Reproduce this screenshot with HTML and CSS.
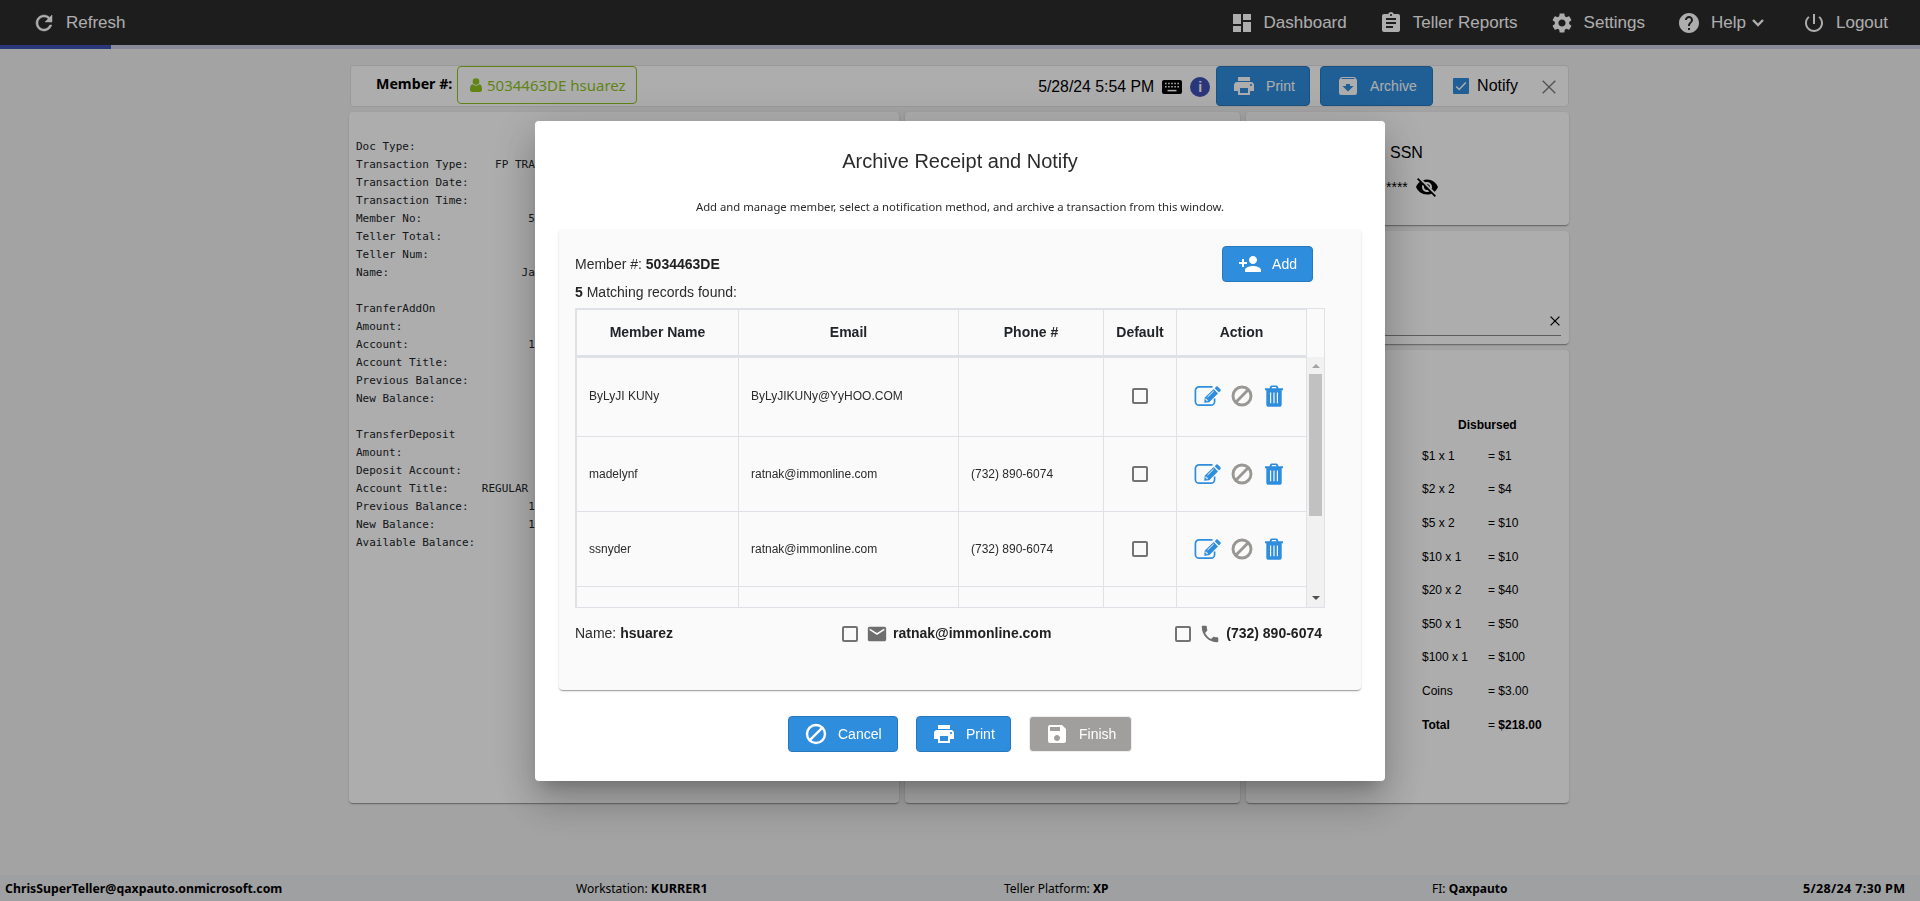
FILE: index.html
```html
<!DOCTYPE html>
<html lang="en">
<head>
    <meta charset="utf-8">
    <title>Teller Receipts</title>
    <link rel="stylesheet" href="styles.css">
</head>
<body>
    <!-- shared icons -->
    <svg class="sprite">
        <symbol id="i-print" viewBox="0 0 24 24"><path d="M19 8H5c-1.660 0-3 1.340-3 3v6h4v4h12v-4h4v-6c0-1.660-1.340-3-3-3zm-3 11H8v-5h8v5zm3-7c-.55 0-1-.45-1-1s.45-1 1-1 1 .45 1 1-.45 1-1 1zm-1-9H6v4h12V3z"/></symbol>
        <symbol id="i-ban" viewBox="0 0 24 24"><circle cx="12" cy="12" r="9" fill="none" stroke="currentColor" stroke-width="2.400"/><path d="M5.800 18.200L18.200 5.800" stroke="currentColor" stroke-width="2.400"/></symbol>
        <symbol id="i-ban-thick" viewBox="0 0 22 22"><circle cx="11" cy="11" r="9" fill="none" stroke="currentColor" stroke-width="2.900"/><path d="M4.800 17.200L17.200 4.800" stroke="currentColor" stroke-width="2.900"/></symbol>
        <symbol id="i-edit" viewBox="0 0 27 22"><path d="M18.500 1.800H5.200A3.800 3.800 0 0 0 1.400 5.600v10.800a3.800 3.800 0 0 0 3.800 3.800h11.600a3.800 3.800 0 0 0 3.800-3.800v-2.900" fill="none" stroke="currentColor" stroke-width="1.700"/><path d="M10.200 17.800l.6-5.200 8.900-8.500 4.300 4.400-8.800 8.700zM20.700 3.200l1.500-1.500c.5-.5 1.200-.5 1.700 0l2.500 2.500c.5.500.5 1.200 0 1.700L25 7.400z"/><path d="M13.500 12l6.200-6M11.900 13.600v1.300h1.300v1.300" fill="none" stroke="#fafafa" stroke-width="1"/></symbol>
        <symbol id="i-trash" viewBox="0 0 20 22"><path d="M5.500 3.300l.8-2A1.500 1.500 0 0 1 7.700.5h4.600a1.500 1.500 0 0 1 1.400.8l.8 2H19v1.900h-1.300v14.200c0 1.400-.9 2.300-2.200 2.300h-11c-1.300 0-2.200-.9-2.200-2.300V5.200H1V3.300zm2 0h5l-.6-1.200H8.100z"/><path d="M6.600 7.500v10.800M10 7.500v10.800M13.400 7.500v10.800" stroke="#fafafa" stroke-width="1.200"/></symbol>
    </svg>

    <header class="navbar">
        <a class="nav-item"><svg class="nav-icon" viewBox="0 0 24 24"><path d="M17.650 6.350C16.200 4.900 14.210 4 12 4c-4.420 0-7.990 3.580-7.990 8s3.570 8 7.990 8c3.730 0 6.840-2.550 7.730-6h-2.080c-.82 2.330-3.040 4-5.650 4-3.310 0-6-2.690-6-6s2.690-6 6-6c1.660 0 3.140.69 4.220 1.780L13 11h7V4l-2.350 2.350z" stroke="currentColor" stroke-width=".5"/></svg>Refresh</a>
        <nav class="nav-right">
            <a class="nav-item"><svg class="nav-icon" viewBox="0 0 24 24"><path d="M3 13h8V3H3v10zm0 8h8v-6H3v6zm10 0h8V11h-8v10zm0-18v6h8V3h-8z"/></svg>Dashboard</a>
            <a class="nav-item"><svg class="nav-icon" viewBox="0 0 24 24"><path d="M19 3h-4.180C14.400 1.840 13.300 1 12 1s-2.400.84-2.820 2H5c-1.100 0-2 .9-2 2v14c0 1.100.9 2 2 2h14c1.100 0 2-.9 2-2V5c0-1.100-.9-2-2-2zm-7 0c.55 0 1 .45 1 1s-.45 1-1 1-1-.45-1-1 .45-1 1-1zm2 14H7v-2h7v2zm3-4H7v-2h10v2zm0-4H7V7h10v2z"/></svg>Teller Reports</a>
            <a class="nav-item"><svg class="nav-icon" viewBox="0 0 24 24"><path d="M19.140 12.940c.04-.3.06-.61.06-.94 0-.32-.02-.64-.07-.94l2.030-1.580c.18-.14.23-.41.12-.61l-1.920-3.320c-.12-.22-.37-.29-.59-.22l-2.390.96c-.5-.38-1.030-.7-1.620-.94l-.36-2.540c-.04-.24-.24-.41-.48-.41h-3.840c-.24 0-.43.17-.47.41l-.36 2.540c-.59.24-1.130.57-1.620.94l-2.390-.96c-.22-.08-.47 0-.59.22L2.740 8.870c-.12.21-.08.47.12.61l2.030 1.580c-.05.3-.09.63-.09.94s.02.64.07.94l-2.030 1.580c-.18.14-.23.41-.12.61l1.920 3.320c.12.22.37.29.59.22l2.390-.96c.5.38 1.030.7 1.620.94l.36 2.540c.05.24.24.41.48.41h3.840c.24 0 .44-.17.47-.41l.36-2.540c.59-.24 1.130-.56 1.620-.94l2.390.96c.22.08.47 0 .59-.22l1.920-3.320c.12-.22.07-.47-.12-.61l-2.010-1.580zM12 15.600c-1.980 0-3.600-1.620-3.600-3.600s1.620-3.600 3.600-3.600 3.600 1.620 3.600 3.600-1.620 3.600-3.600 3.600z"/></svg>Settings</a>
            <a class="nav-item"><svg class="nav-icon" viewBox="0 0 24 24"><path d="M12 2C6.480 2 2 6.480 2 12s4.480 10 10 10 10-4.480 10-10S17.520 2 12 2zm1 17h-2v-2h2v2zm2.070-7.750l-.9.920C13.450 12.900 13 13.500 13 15h-2v-.5c0-1.100.45-2.100 1.170-2.830l1.240-1.260c.37-.36.59-.86.59-1.410 0-1.100-.9-2-2-2s-2 .9-2 2H8c0-2.210 1.790-4 4-4s4 1.790 4 4c0 .88-.36 1.680-.93 2.250z"/></svg>Help<svg class="nav-caret" viewBox="0 0 12 8"><path d="M1 1l5 5 5-5" fill="none" stroke="currentColor" stroke-width="2.400"/></svg></a>
            <a class="nav-item nav-logout"><svg class="nav-icon" viewBox="0 0 24 24"><path d="M13 3h-2v10h2V3zm4.830 2.170l-1.420 1.420C17.990 7.860 19 9.810 19 12c0 3.870-3.130 7-7 7s-7-3.130-7-7c0-2.190 1.010-4.140 2.580-5.420L6.170 5.170C4.230 6.820 3 9.260 3 12c0 4.970 4.030 9 9 9s9-4.030 9-9c0-2.740-1.230-5.180-3.170-6.830z"/></svg>Logout</a>
        </nav>
    </header>
    <div class="progress"><div class="progress-fill"></div></div>

    <main class="page">
        <section class="toolbar">
            <strong class="toolbar-label">Member #:</strong>
            <span class="member-tag"><svg class="user-icon" viewBox="0 0 12 14"><circle cx="6" cy="3.600" r="3.300"/><path d="M2.600 6.300A4.600 4.600 0 0 0 6 7.700a4.600 4.600 0 0 0 3.400-1.400C11.400 6.700 12 8.700 12 11.200 12 13 11.200 14 9.800 14H2.200C.8 14 0 13 0 11.200 0 8.700.6 6.700 2.600 6.300z"/></svg>5034463DE hsuarez</span>
            <div class="toolbar-right">
                <span class="toolbar-date">5/28/24 5:54 PM</span>
                <svg class="kbd-icon" viewBox="0 0 20 14"><rect width="20" height="14" rx="2"/><path d="M3 3.500h14M3 6.800h14" stroke="#fff" stroke-width="1.600" stroke-dasharray="1.600 1.500"/><path d="M5.500 10.600h9" stroke="#fff" stroke-width="1.600"/></svg>
                <span class="info-icon">i</span>
                <button class="btn btn-tall btn-print"><svg class="btn-icon"><use href="#i-print"/></svg>Print</button>
                <button class="btn btn-tall btn-archive"><svg class="btn-icon" viewBox="0 0 24 24"><path d="M20.540 5.230l-1.390-1.680C18.880 3.210 18.470 3 18 3H6c-.47 0-.88.21-1.160.55L3.460 5.230C3.170 5.570 3 6.020 3 6.500V19c0 1.100.9 2 2 2h14c1.100 0 2-.9 2-2V6.500c0-.48-.17-.93-.46-1.270zM12 17.500L6.500 12H10v-2h4v2h3.500L12 17.500zM5.120 5l.81-1h12l.94 1H5.120z"/></svg>Archive</button>
                <label class="notify"><svg class="check-on" viewBox="0 0 16 16"><rect width="16" height="16" rx="1"/><path d="M3.200 8.500l3 3 6.600-7" fill="none" stroke="#fff" stroke-width="1.500"/></svg>Notify</label>
                <svg class="close-icon" viewBox="0 0 14 14"><path d="M.7.7l12.600 12.600M13.300.7L.7 13.300"/></svg>
            </div>
        </section>

        <section class="columns">
            <div class="card receipt">
<pre>Doc Type:
Transaction Type:    FP TRAN
Transaction Date:          5
Transaction Time:
Member No:                50
Teller Total:
Teller Num:
Name:                    Jam

TranferAddOn
Amount:
Account:                  10
Account Title:
Previous Balance:          4
New Balance:               4

TransferDeposit
Amount:
Deposit Account:
Account Title:     REGULAR S
Previous Balance:         1
New Balance:              1
Available Balance:</pre>
            </div>
            <div class="card"></div>
            <div class="side">
                <div class="card ssn">
                    <div class="ssn-title">SSN</div>
                    <div class="ssn-value">****<svg class="eye-icon" viewBox="0 0 24 24"><path d="M12 7c2.760 0 5 2.240 5 5 0 .65-.13 1.260-.36 1.830l2.920 2.920c1.510-1.260 2.700-2.890 3.430-4.750-1.730-4.390-6-7.500-11-7.500-1.400 0-2.740.25-3.980.7l2.160 2.160C10.740 7.130 11.350 7 12 7zM2 4.270l2.280 2.280.46.46C3.080 8.300 1.780 10.020 1 12c1.730 4.390 6 7.500 11 7.500 1.550 0 3.030-.3 4.380-.84l.42.42L19.730 22 21 20.730 3.270 3 2 4.270zM7.530 9.800l1.550 1.550c-.05.21-.08.43-.08.65 0 1.660 1.340 3 3 3 .22 0 .44-.03.65-.08l1.550 1.550c-.67.33-1.410.53-2.200.53-2.760 0-5-2.240-5-5 0-.79.2-1.530.53-2.200zm4.310-.78l3.150 3.150.02-.16c0-1.660-1.340-3-3-3l-.17.01z"/></svg></div>
                </div>
                <div class="card search">
                    <div class="search-field"><svg class="clear-icon" viewBox="0 0 10 10"><path d="M.6.6l8.800 8.800M9.400.6L.6 9.400"/></svg></div>
                </div>
                <div class="card cash">
                    <div class="cash-title">Disbursed</div>
                    <dl class="cash-list">
                        <dt>$1 x 1</dt><dd>= $1</dd>
                        <dt>$2 x 2</dt><dd>= $4</dd>
                        <dt>$5 x 2</dt><dd>= $10</dd>
                        <dt>$10 x 1</dt><dd>= $10</dd>
                        <dt>$20 x 2</dt><dd>= $40</dd>
                        <dt>$50 x 1</dt><dd>= $50</dd>
                        <dt>$100 x 1</dt><dd>= $100</dd>
                        <dt>Coins</dt><dd>= $3.00</dd>
                        <dt><b>Total</b></dt><dd>= <b>$218.00</b></dd>
                    </dl>
                </div>
            </div>
        </section>
    </main>

    <footer class="statusbar">
        <b class="status-user">ChrisSuperTeller@qaxpauto.onmicrosoft.com</b>
        <span>Workstation: <b class="status-station">KURRER1</b></span>
        <span>Teller Platform: <b>XP</b></span>
        <span>FI: <b>Qaxpauto</b></span>
        <b class="status-time">5/28/24 7:30 PM</b>
    </footer>

    <div class="backdrop">
        <div class="dialog">
            <h2 class="dialog-title">Archive Receipt and Notify</h2>
            <p class="dialog-text">Add and manage member, select a notification method, and archive a transaction from this window.</p>

            <div class="panel">
                <div class="panel-head">
                    <div class="panel-info">
                        <div>Member #: <b>5034463DE</b></div>
                        <div><b>5</b> Matching records found:</div>
                    </div>
                    <button class="btn btn-add"><svg class="btn-icon" viewBox="0 0 24 24"><path d="M15 12c2.210 0 4-1.790 4-4s-1.790-4-4-4-4 1.790-4 4 1.790 4 4 4zm-9-2V7H4v3H1v2h3v3h2v-3h3v-2H6zm9 4c-2.670 0-8 1.340-8 4v2h16v-2c0-2.660-5.330-4-8-4z"/></svg>Add</button>
                </div>

                <div class="grid">
                    <table class="members members-head">
                        <tr><th class="col-name">Member Name</th><th class="col-email">Email</th><th class="col-phone">Phone #</th><th class="col-default">Default</th><th class="col-action">Action</th></tr>
                    </table>
                    <div class="grid-body">
                        <table class="members">
                            <tr class="row-first">
                                <td class="col-name">ByLyJI KUNy</td><td class="col-email">ByLyJIKUNy@YyHOO.COM</td><td class="col-phone"></td>
                                <td class="col-default"><span class="check"></span></td>
                                <td class="col-action"><div class="actions"><svg class="edit"><use href="#i-edit"/></svg><svg class="ban"><use href="#i-ban-thick"/></svg><svg class="trash"><use href="#i-trash"/></svg></div></td>
                            </tr>
                            <tr>
                                <td>madelynf</td><td>ratnak@immonline.com</td><td>(732) 890-6074</td>
                                <td><span class="check"></span></td>
                                <td><div class="actions"><svg class="edit"><use href="#i-edit"/></svg><svg class="ban"><use href="#i-ban-thick"/></svg><svg class="trash"><use href="#i-trash"/></svg></div></td>
                            </tr>
                            <tr>
                                <td>ssnyder</td><td>ratnak@immonline.com</td><td>(732) 890-6074</td>
                                <td><span class="check"></span></td>
                                <td><div class="actions"><svg class="edit"><use href="#i-edit"/></svg><svg class="ban"><use href="#i-ban-thick"/></svg><svg class="trash"><use href="#i-trash"/></svg></div></td>
                            </tr>
                            <tr><td></td><td></td><td></td><td></td><td></td></tr>
                        </table>
                        <div class="scrollbar">
                            <span class="arrow arrow-up"></span>
                            <span class="thumb"></span>
                            <span class="arrow arrow-down"></span>
                        </div>
                    </div>
                </div>

                <div class="contact">
                    <div class="contact-name">Name: <b>hsuarez</b></div>
                    <label class="contact-item"><span class="check"></span><svg class="mail" viewBox="0 0 24 24"><path d="M20 4H4c-1.100 0-1.990.9-1.990 2L2 18c0 1.100.9 2 2 2h16c1.100 0 2-.9 2-2V6c0-1.100-.9-2-2-2zm0 4l-8 5-8-5V6l8 5 8-5v2z"/></svg><b>ratnak@immonline.com</b></label>
                    <label class="contact-item contact-phone"><span class="check"></span><svg class="phone" viewBox="0 0 24 24"><path d="M6.620 10.790c1.440 2.830 3.760 5.140 6.590 6.590l2.200-2.200c.27-.27.67-.36 1.020-.24 1.120.37 2.330.57 3.570.57.55 0 1 .45 1 1V20c0 .55-.45 1-1 1-9.390 0-17-7.610-17-17 0-.55.45-1 1-1h3.500c.55 0 1 .45 1 1 0 1.250.2 2.450.57 3.570.11.35.03.74-.25 1.020l-2.200 2.200z"/></svg><b>(732) 890-6074</b></label>
                </div>
            </div>

            <div class="dialog-actions">
                <button class="btn btn-cancel"><svg class="btn-icon"><use href="#i-ban"/></svg>Cancel</button>
                <button class="btn btn-dprint"><svg class="btn-icon"><use href="#i-print"/></svg>Print</button>
                <button class="btn btn-finish" disabled><svg class="btn-icon" viewBox="0 0 24 24"><path d="M17 3H5c-1.110 0-2 .9-2 2v14c0 1.100.89 2 2 2h14c1.100 0 2-.9 2-2V7l-4-4zm-5 16c-1.660 0-3-1.340-3-3s1.340-3 3-3 3 1.340 3 3-1.340 3-3 3zm3-10H5V5h10v4z"/></svg>Finish</button>
            </div>
        </div>
    </div>
</body>
</html>
```

FILE: styles.css
```css
* {
    box-sizing: border-box;
}
body {
    margin: 0;
    height: 901px;
    display: flex;
    flex-direction: column;
    overflow: hidden;
    background-color: #f1f1f1;
    color: #000;
    font-family: Arial, "Liberation Sans", sans-serif;
    font-size: 14px;
}
svg {
    fill: currentColor;
    flex: none;
}
.sprite {
    position: absolute;
    width: 0;
    height: 0;
}

/* top bar */
.navbar {
    display: flex;
    justify-content: space-between;
    height: 45px;
    padding: 0 32px;
    background-color: #2c2c2c;
    color: #fff;
    font-size: 17px;
}
.nav-item {
    display: flex;
    align-items: center;
}
.nav-right {
    display: flex;
    gap: 32px;
}
.nav-logout {
    margin-left: 6px;
}
.nav-icon {
    width: 24px;
    height: 24px;
    margin-right: 10px;
}
.nav-caret {
    width: 12px;
    height: 8px;
    margin-left: 6px;
}
.progress {
    height: 4px;
    background-color: #c9cce4;
}
.progress-fill {
    width: 111px;
    height: 4px;
    background-color: #3f51b5;
}

.page {
    width: 1220px;
    margin-left: 349px;
    padding-top: 16px;
}
.toolbar {
    display: flex;
    align-items: flex-start;
    height: 42px;
    margin-left: 1px;
    border: 1px solid #e2e2e2;
    border-radius: 4px;
    background-color: #fff;
    font-size: 16px;
}
.toolbar-label {
    width: 106px;
    padding: 8px 0 0 25px;
    font-family: "Segoe UI", "Noto Sans", sans-serif;
    font-size: 14.2px;
    white-space: nowrap;
}
.member-tag {
    display: flex;
    align-items: center;
    width: 180px;
    height: 38px;
    padding-left: 12px;
    border: 1px solid #8fc31f;
    border-radius: 4px;
    color: #8fc31f;
    font-family: "Segoe UI", "Noto Sans", sans-serif;
    font-size: 15px;
    white-space: nowrap;
}
.user-icon {
    width: 12px;
    height: 14px;
    margin-right: 5px;
}
.toolbar-right {
    display: flex;
    align-items: center;
    height: 40px;
    margin-left: auto;
    padding-right: 12px;
}
.toolbar-date {
    padding-top: 2px;
    font-size: 15.8px;
}
.kbd-icon {
    width: 20px;
    height: 14px;
    margin: 1px 8px 0;
}
.info-icon {
    width: 20px;
    height: 20px;
    margin: 2px 6px 0 0;
    border-radius: 50%;
    background-color: #3f51b5;
    color: #fff;
    font-size: 14px;
    font-weight: bold;
    line-height: 20px;
    text-align: center;
}
.notify {
    display: flex;
    align-items: center;
    margin: 0 24px 0 20px;
}
.check-on {
    width: 16px;
    height: 16px;
    margin-right: 8px;
    color: #2f8ddd;
}
.close-icon {
    width: 14px;
    height: 14px;
    margin-top: 2px;
    stroke: #777;
    stroke-width: 1.3;
}

/* buttons */
.btn {
    display: flex;
    align-items: center;
    height: 36px;
    padding: 0 15px;
    border: 1px solid #2878be;
    border-radius: 4px;
    background-color: #2f8ddd;
    color: #fff;
    font-family: inherit;
    font-size: 14px;
}
.btn-icon {
    width: 24px;
    height: 24px;
    margin-right: 10px;
}
.btn-tall {
    height: 40px;
}
.btn-print {
    width: 94px;
    margin-right: 10px;
}
.btn-archive {
    width: 113px;
}

.columns {
    display: flex;
    gap: 6px;
    height: 691px;
    margin-top: 5px;
}
.card {
    width: 335px;
    border-radius: 4px;
    background-color: #fff;
    box-shadow: 0 2px 1px -1px rgba(0,0,0,.2), 0 1px 1px 0 rgba(0,0,0,.14), 0 1px 3px 0 rgba(0,0,0,.12);
}
.receipt {
    width: 550px;
    padding: 26px 7px;
}
.receipt pre {
    width: 190px;
    margin: 0;
    font-family: Consolas, "DejaVu Sans Mono", monospace;
    font-size: 11px;
    line-height: 18px;
    color: #212529;
}
.side {
    display: flex;
    flex-direction: column;
    gap: 6px;
    width: 323px;
}
.side .card {
    width: 323px;
}
.ssn {
    height: 113px;
    padding: 32px 0 0 140px;
}
.ssn-title {
    padding-left: 4px;
    font-size: 16px;
}
.ssn-value {
    display: flex;
    align-items: center;
    margin-top: 13px;
}
.eye-icon {
    width: 24px;
    height: 24px;
    margin-left: 7px;
}
.search {
    height: 113px;
    padding: 0 8px;
}
.search-field {
    display: flex;
    justify-content: flex-end;
    height: 105px;
    padding: 85px 1px 0;
    border-bottom: 1px solid #8a8a8a;
}
.clear-icon {
    width: 10px;
    height: 10px;
    stroke: #000;
    stroke-width: 1.3;
}
.cash {
    flex: 1;
    padding-top: 68px;
    font-size: 12px;
}
.cash-title {
    margin-left: 212px;
    font-weight: bold;
}
.cash-list {
    display: grid;
    grid-template-columns: 66px auto;
    grid-auto-rows: 33.6px;
    align-items: center;
    margin: 7px 0 0 176px;
}
.cash-list dd {
    margin: 0;
}

.statusbar {
    display: grid;
    grid-template-columns: 571px 428px 428px 371px auto;
    align-items: center;
    height: 26px;
    margin-top: auto;
    padding-left: 5px;
    background-color: #ebecee;
    font-family: "Segoe UI", "Noto Sans", sans-serif;
    font-size: 12px;
}
.status-user {
    font-size: 12.3px;
}
.status-station {
    font-size: 12.6px;
}
.status-time {
    font-size: 12.6px;
    letter-spacing: .3px;
}

/* archive dialog */
.backdrop {
    position: fixed;
    inset: 0;
    padding: 121px 0 0 535px;
    background-color: rgba(0,0,0,.32);
}
.dialog {
    width: 850px;
    height: 660px;
    padding: 27px 24px 0;
    border-radius: 4px;
    background-color: #fff;
    color: #2b2b2b;
    box-shadow: 0 11px 15px -7px rgba(0,0,0,.2), 0 24px 38px 3px rgba(0,0,0,.14), 0 9px 46px 8px rgba(0,0,0,.12);
}
.dialog b {
    color: #212121;
}
.dialog-title {
    margin: 0;
    font-size: 20px;
    font-weight: normal;
    line-height: 26px;
    text-align: center;
}
.dialog-text {
    margin: 24px 0 0;
    font-family: "Segoe UI", "Noto Sans", sans-serif;
    font-size: 11.3px;
    line-height: 18px;
    text-align: center;
}
.panel {
    height: 460px;
    margin-top: 14px;
    padding: 16px 36px 0 16px;
    border-radius: 4px;
    background-color: #fafafa;
    box-shadow: 0 2px 1px -1px rgba(0,0,0,.2), 0 1px 1px 0 rgba(0,0,0,.14), 0 1px 3px 0 rgba(0,0,0,.12);
}
.panel-head {
    display: flex;
    justify-content: space-between;
    height: 62px;
    padding-right: 12px;
}
.panel-info {
    padding-top: 4px;
    line-height: 28px;
}
.grid {
    width: 750px;
    height: 300px;
    border: 1px solid #dee2e6;
}
.grid-body {
    display: flex;
    height: 250px;
    overflow: hidden;
}
.members {
    flex: none;
    width: 731px;
    height: 0;
    table-layout: fixed;
    border-spacing: 0;
    border-left: 1px solid #dee2e6;
    font-size: 12px;
}
.members-head {
    height: 48px;
    font-size: 14px;
    color: #212529;
}
.members th {
    height: 48px;
    padding: 0 0 1px;
    border-top: 1px solid #dee2e6;
    border-right: 1px solid #dee2e6;
    border-bottom: 2px solid #dee2e6;
}
.members td {
    height: 75px;
    padding: 0 0 0 12px;
    border-right: 1px solid #dee2e6;
    border-bottom: 1px solid #dee2e6;
}
.members .row-first td {
    height: 80px;
    padding-bottom: 3px;
    border-top: 1px solid #dee2e6;
}
.members .col-name { width: 162px; }
.members .col-email { width: 220px; }
.members .col-phone { width: 145px; }
.members .col-default { width: 73px; }
.members .col-action { width: 130px; }
.members td:nth-child(4) {
    padding-left: 28px;
}
.members td:nth-child(5) {
    padding-left: 17px;
}
.check {
    display: block;
    flex: none;
    width: 16px;
    height: 16px;
    border: 2px solid #737373;
    border-radius: 2px;
}
.actions {
    display: flex;
    align-items: center;
    color: #2f8ddd;
}
.actions .edit {
    width: 27px;
    height: 22px;
}
.actions .ban {
    width: 22px;
    height: 22px;
    margin: 0 11px 0 10px;
    color: #999793;
}
.actions .trash {
    width: 20px;
    height: 22px;
}
.scrollbar {
    display: flex;
    flex-direction: column;
    align-items: center;
    width: 17px;
    padding: 7px 0;
    background-color: #f1f1f1;
}
.arrow {
    border: 4px solid transparent;
    border-top-width: 0;
    border-bottom-width: 0;
}
.arrow-up {
    border-bottom: 4px solid #a3a3a3;
}
.arrow-down {
    margin-top: auto;
    border-top: 4px solid #505050;
}
.thumb {
    width: 13px;
    height: 142px;
    margin-top: 6px;
    background-color: #c1c1c1;
}
.contact {
    display: flex;
    align-items: center;
    height: 52px;
}
.contact-name {
    width: 267px;
    padding-bottom: 2px;
}
.contact-item {
    display: flex;
    align-items: center;
}
.contact-item b {
    padding-bottom: 2px;
}
.contact-phone {
    margin-left: auto;
    margin-right: 3px;
}
.contact svg {
    color: #6e6e6e;
}
.mail {
    width: 22px;
    height: 22px;
    margin: 0 5px 0 8px;
}
.phone {
    width: 22px;
    height: 22px;
    margin: 0 5px 0 8px;
}
.dialog-actions {
    display: flex;
    justify-content: center;
    align-items: center;
    gap: 18px;
    margin-top: 26px;
}
.btn-cancel {
    width: 110px;
}
.btn-dprint {
    width: 95px;
}
.btn-finish {
    width: 103px;
    height: 36px;
    border-color: #eee;
    background-color: #a09f9d;
}
```
